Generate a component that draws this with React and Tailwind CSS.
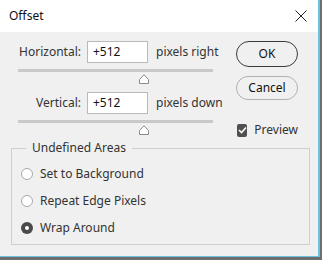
import { useState } from "react";

function Thumb() {
    return (
        <svg width="12" height="10" viewBox="0 0 12 10" className="block">
            <path d="M1.5 9.5 L1.5 5.5 L6 0.8 L10.5 5.5 L10.5 9.5 Z" fill="#fff" stroke="#8a8a8a" strokeWidth="1" strokeLinejoin="round" />
        </svg>
    );
}

function Slider({ thumbLeft }) {
    return (
        <div className="ml-[18px] w-[195px]">
            <div className="h-[3px] bg-[#c9c9c9]" />
            <div className="mt-[2px] h-[10px]" style={{ paddingLeft: thumbLeft }}>
                <Thumb />
            </div>
        </div>
    );
}

function Row({ label, value, unit }) {
    return (
        <div className="flex items-center h-[22px]">
            <div className="w-[82px] text-right pr-[1px]">{label}</div>
            <div className="ml-[5px] w-[61px] h-[22px] bg-white border border-[#b9b9b9] flex items-center pl-[5px] text-[#111]">
                {value}
            </div>
            <div className="ml-[8px]">{unit}</div>
        </div>
    );
}

function Radio({ checked, label }) {
    return (
        <div className="flex items-center h-[27px]">
            {checked ? (
                <span className="w-[12px] h-[12px] rounded-full bg-[#4a4a4a] flex items-center justify-center">
                    <span className="w-[4px] h-[4px] rounded-full bg-white" />
                </span>
            ) : (
                <span className="w-[12px] h-[12px] rounded-full bg-white border border-[#a8a8a8]" />
            )}
            <span className="ml-[7px]">{label}</span>
        </div>
    );
}

export default function App() {
    const [mode] = useState("wrap");

    return (
        <div className="w-[322px] h-[260px] bg-[#6e6e6e] overflow-hidden text-[12px] text-[#333]"
             style={{ fontFamily: '"Segoe UI", "Noto Sans", "Open Sans", sans-serif' }}>
            <div className="w-[320px] h-[257px] bg-[#f0f0f0] border-r-2 border-b border-[#6cc0e0] flex flex-col">
                <div className="h-[32px] bg-white flex items-center justify-between pl-[9px] pr-[11px] text-[#111]">
                    <span>Offset</span>
                    <svg width="12" height="12" viewBox="0 0 12 12">
                        <path d="M0.5 0.5 L11.5 11.5 M11.5 0.5 L0.5 11.5" stroke="#222" strokeWidth="1" />
                    </svg>
                </div>

                <div className="flex pt-[9px]">
                    <div className="w-[230px]">
                        <Row label="Horizontal:" value="+512" unit="pixels right" />
                        <div className="mt-[6px]">
                            <Slider thumbLeft={120} />
                        </div>
                        <div className="mt-[8px]">
                            <Row label="Vertical:" value="+512" unit="pixels down" />
                        </div>
                        <div className="mt-[6px]">
                            <Slider thumbLeft={120} />
                        </div>
                    </div>

                    <div className="ml-[6px] flex flex-col w-[62px]">
                        <button className="h-[26px] rounded-full border border-[#3a3a3a] bg-[#f0f0f0] text-[#111]">OK</button>
                        <button className="mt-[9px] h-[24px] rounded-full border border-[#b0b0b0] bg-[#f0f0f0] text-[#111]">Cancel</button>
                        <div className="mt-[21px] flex items-center ml-[1px]">
                            <span className="w-[13px] h-[13px] rounded-[2px] bg-[#505050] flex items-center justify-center">
                                <svg width="9" height="8" viewBox="0 0 9 8">
                                    <path d="M1 4 L3.5 6.5 L8 1.5" fill="none" stroke="#fff" strokeWidth="1.6" />
                                </svg>
                            </span>
                            <span className="ml-[7px]">Preview</span>
                        </div>
                    </div>
                </div>

                <fieldset className="mt-[1px] ml-[11px] w-[299px] h-[105px] border border-[#cfcfcf] pl-[9px]">
                    <legend className="ml-[5px] px-[6px] leading-[16px]">Undefined Areas</legend>
                    <div className="mt-[4px]">
                        <Radio checked={mode === "bg"} label="Set to Background" />
                        <Radio checked={mode === "edge"} label="Repeat Edge Pixels" />
                        <Radio checked={mode === "wrap"} label="Wrap Around" />
                    </div>
                </fieldset>
            </div>
        </div>
    );
}
